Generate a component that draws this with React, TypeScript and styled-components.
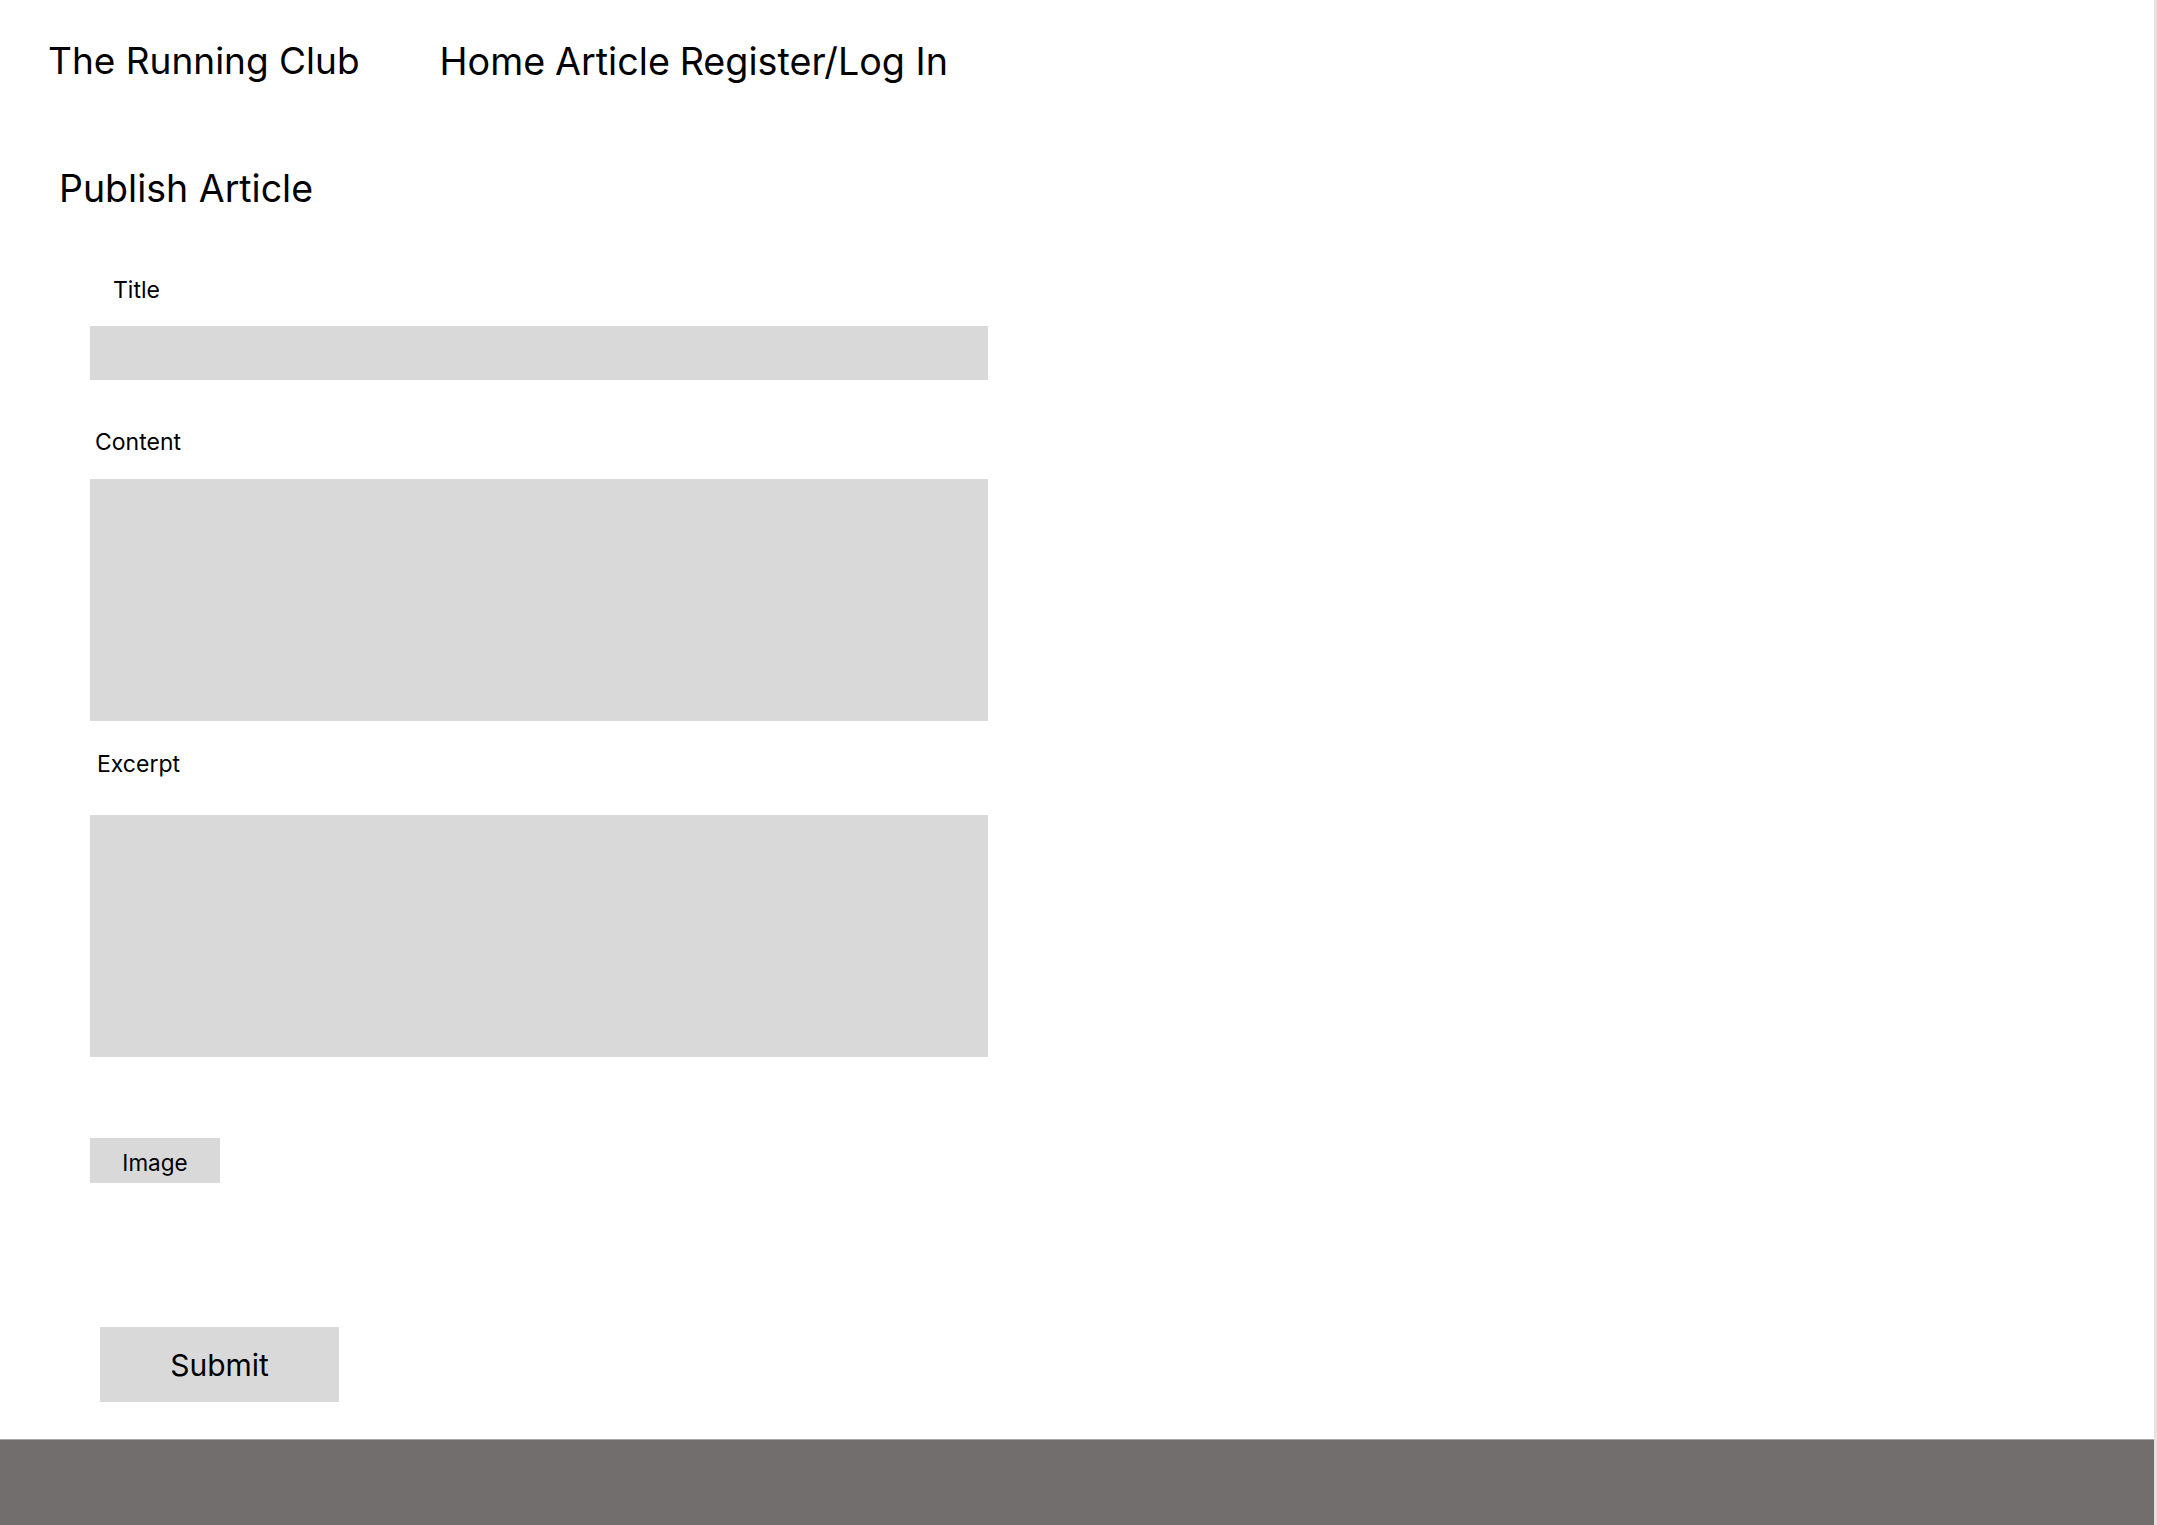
import React from "react";
import styled, { createGlobalStyle } from "styled-components";

const GlobalStyle = createGlobalStyle`
  html, body {
    margin: 0;
    padding: 0;
    background: #ffffff;
  }
  body {
    font-family: Inter, "Noto Sans", "Liberation Sans", sans-serif;
    color: #000000;
  }
  * { box-sizing: border-box; }
`;

const Page = styled.div`
  width: 2157px;
  min-height: 1525px;
  display: flex;
  flex-direction: column;
  border-right: 3px solid #e2e2e2;
  background: #ffffff;
`;

const Header = styled.header`
  display: flex;
  align-items: flex-start;
  gap: 80px;
  padding: 38px 0 0 48px;
`;

const Brand = styled.div`
  font-size: 37px;
  line-height: 46px;
  font-weight: 400;
`;

const Nav = styled.nav`
  display: flex;
  gap: 0.26em;
  font-size: 37.7px;
  line-height: 46px;
`;

const NavLink = styled.a`
  color: #000000;
  text-decoration: none;
`;

const Main = styled.main`
  flex: 1;
  display: flex;
  flex-direction: column;
  padding: 81px 0 37px 0;
`;

const Heading = styled.h1`
  margin: 0 0 0 59px;
  font-size: 37.5px;
  line-height: 48px;
  font-weight: 400;
`;

const Form = styled.form`
  display: flex;
  flex-direction: column;
  align-items: flex-start;
  padding-left: 90px;
`;

const Label = styled.label<{ $offset: number; $top: number; $gap: number }>`
  display: block;
  margin: ${(p) => p.$top}px 0 ${(p) => p.$gap}px ${(p) => p.$offset}px;
  font-size: 23px;
  line-height: 29px;
`;

const Field = styled.div<{ $height: number }>`
  width: 898px;
  height: ${(p) => p.$height}px;
  background: #d9d9d9;
`;

const ImageButton = styled.button`
  margin-top: 81px;
  width: 130px;
  height: 45px;
  border: none;
  padding: 4px 0 0 0;
  background: #d9d9d9;
  font-family: inherit;
  font-size: 22.5px;
  color: #000000;
  display: flex;
  align-items: center;
  justify-content: center;
`;

const SubmitButton = styled.button`
  margin: 144px 0 0 10px;
  width: 239px;
  height: 75px;
  border: none;
  padding: 0;
  background: #d9d9d9;
  font-family: inherit;
  font-size: 30px;
  color: #000000;
  display: flex;
  align-items: center;
  justify-content: center;
`;

const Footer = styled.footer`
  height: 87px;
  background: #726e6d;
  border-top: 1px solid #a9a7a6;
`;

export default function App() {
  return (
    <>
      <GlobalStyle />
      <Page>
        <Header>
          <Brand>The Running Club</Brand>
          <Nav>
            <NavLink href="#">Home</NavLink>
            <NavLink href="#">Article</NavLink>
            <NavLink href="#">Register/Log In</NavLink>
          </Nav>
        </Header>
        <Main>
          <Heading>Publish Article</Heading>
          <Form onSubmit={(e) => e.preventDefault()}>
            <Label $offset={23} $top={63} $gap={21}>Title</Label>
            <Field $height={54} />
            <Label $offset={5} $top={48} $gap={22}>Content</Label>
            <Field $height={242} />
            <Label $offset={7} $top={29} $gap={36}>Excerpt</Label>
            <Field $height={242} />
            <ImageButton type="button">Image</ImageButton>
            <SubmitButton type="submit">Submit</SubmitButton>
          </Form>
        </Main>
        <Footer />
      </Page>
    </>
  );
}
